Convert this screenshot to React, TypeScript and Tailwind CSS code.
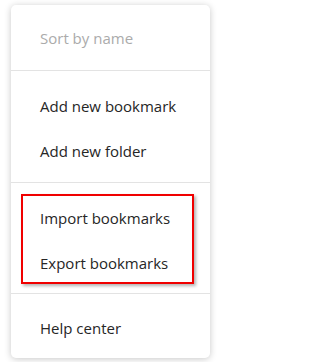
import React from "react";

const font = { fontFamily: '"Open Sans", "Noto Sans", sans-serif' };

type Item = { label: string; disabled?: boolean };

const MenuItem: React.FC<Item> = ({ label, disabled }) => (
  <div
    className={
      disabled
        ? "h-[45px] flex items-center pl-[29px] text-[15px] text-[#ababab]"
        : "h-[45px] flex items-center pl-[29px] text-[15px] text-[#262626]"
    }
  >
    {label}
  </div>
);

const Divider = () => <div className="h-px bg-[#e3e3e3]" />;

export default function App() {
  return (
    <div className="w-[214px] h-[362px] bg-white pt-[5px] pl-[11px]" style={font}>
      <div className="w-[199px] bg-white rounded-[5px] shadow-[0_1px_7px_rgba(0,0,0,0.22)]">
        {/* Sort */}
        <div className="pt-[11px] pb-[9px]">
          <MenuItem label="Sort by name" disabled />
        </div>
        <Divider />

        {/* Add */}
        <div className="pt-[13px] pb-[8px]">
          <MenuItem label="Add new bookmark" />
          <MenuItem label="Add new folder" />
        </div>
        <Divider />

        {/* Import / export, highlighted */}
        <div className="relative pt-[13px] pb-[7px]">
          <MenuItem label="Import bookmarks" />
          <MenuItem label="Export bookmarks" />
          <div className="absolute left-[10px] top-[11px] w-[173px] h-[90px] border-2 border-[#f00000] shadow-[2px_2px_3px_rgba(0,0,0,0.3)]" />
        </div>
        <Divider />

        {/* Help */}
        <div className="pt-[12px] pb-[7px]">
          <MenuItem label="Help center" />
        </div>
      </div>
    </div>
  );
}
